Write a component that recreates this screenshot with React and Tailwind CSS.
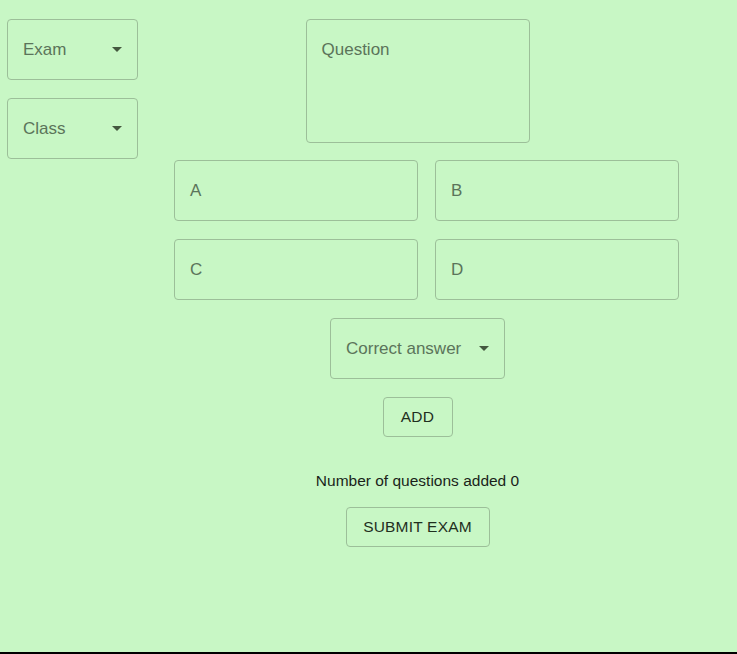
import React from 'react';

const box = 'border border-[#9cbf99] rounded-[4px] bg-transparent';
const label = 'text-[17px] text-[#5b745a] leading-5';

function Arrow() {
  return (
    <svg width="10" height="5" viewBox="0 0 10 5" className="shrink-0">
      <path d="M0 0 L10 0 L5 5 Z" fill="#44583f" />
    </svg>
  );
}

function SelectBox({ text, width }) {
  return (
    <div className={`${box} ${width} h-[61px] flex items-center justify-between pl-[15px] pr-[15px]`}>
      <span className={label}>{text}</span>
      <Arrow />
    </div>
  );
}

function Field({ text }) {
  return (
    <div className={`${box} w-[244px] h-[61px] flex items-center pl-[15px]`}>
      <span className={label}>{text}</span>
    </div>
  );
}

function OutlineButton({ children, width }) {
  return (
    <button
      className={`${box} ${width} h-[40px] flex items-center justify-center text-[15.5px] uppercase text-[#1f2f1e] tracking-[0.2px]`}
    >
      {children}
    </button>
  );
}

export default function App() {
  return (
    <div
      className="h-[654px] bg-[#c8f7c5] border-b-2 border-black flex"
      style={{ fontFamily: '"Liberation Sans", Arial, sans-serif' }}
    >
      {/* left column: exam / class pickers */}
      <div className="w-[150px] pl-[7px] pt-[19px] flex flex-col gap-[18px]">
        <SelectBox text="Exam" width="w-[131px]" />
        <SelectBox text="Class" width="w-[131px]" />
      </div>

      {/* main column */}
      <div className="w-[535px] pt-[19px] flex flex-col items-center">
        <div className={`${box} w-[224px] h-[124px] pl-[15px] pt-[18px]`}>
          <span className={label}>Question</span>
        </div>

        <div className="self-start ml-[24px] mt-[17px] flex gap-[17px]">
          <Field text="A" />
          <Field text="B" />
        </div>
        <div className="self-start ml-[24px] mt-[18px] flex gap-[17px]">
          <Field text="C" />
          <Field text="D" />
        </div>

        <div className="mt-[18px]">
          <SelectBox text="Correct answer" width="w-[175px]" />
        </div>

        <div className="mt-[18px]">
          <OutlineButton width="w-[70px]">Add</OutlineButton>
        </div>

        <p className="mt-[34px] text-[15.5px] leading-5 text-[#1a1f1a]">Number of questions added 0</p>

        <div className="mt-[16px]">
          <OutlineButton width="w-[144px]">Submit exam</OutlineButton>
        </div>
      </div>
    </div>
  );
}
